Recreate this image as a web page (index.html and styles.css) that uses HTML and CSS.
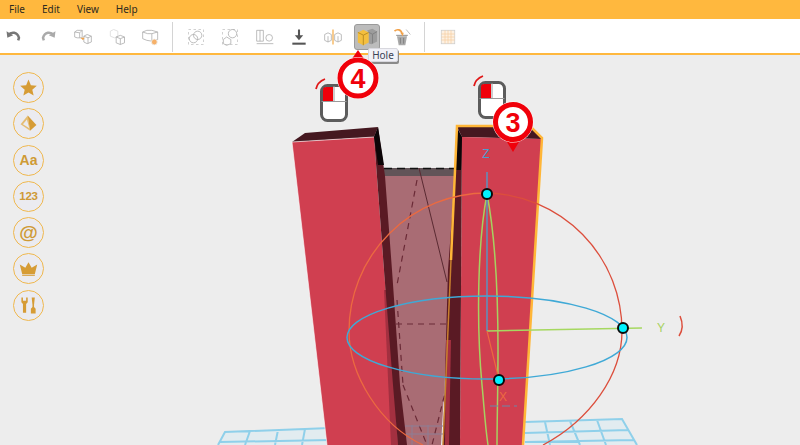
FILE: index.html
```html
<!DOCTYPE html>
<html lang="en">
<head>
<meta charset="utf-8">
<title>3D Builder</title>
<link rel="stylesheet" href="styles.css">
</head>
<body>
<div class="app">
  <nav class="menubar">
    <span class="menu-item">File</span>
    <span class="menu-item">Edit</span>
    <span class="menu-item">View</span>
    <span class="menu-item">Help</span>
  </nav>
  <div class="toolbar">
    <div class="tool"><svg viewBox="0 0 24 24" class="ico"><path d="M5 10c4-5 11-4 13 3l-1 3" class="s-dark"/><path d="M3 5l1 8 7-3z" class="f-dark"/></svg></div>
    <div class="tool"><svg viewBox="0 0 24 24" class="ico"><path d="M19 10c-4-5-11-4-13 3l1 3" class="s-mid"/><path d="M21 5l-1 8-7-3z" class="f-mid"/></svg></div>
    <div class="tool"><svg viewBox="0 0 24 24" class="ico"><path d="M2 6l3-2 6 0 0 9-6 0-3-1zM2 6l6 1 3-3M8 7v6" class="s-thin"/><path d="M13 11l4-2 5 2v7l-5 2-4-2zM13 11l5 2 4-2M18 13v7" class="s-thin"/><path d="M9 13h5l-2 3z" class="f-orange"/></svg></div>
    <div class="tool"><svg viewBox="0 0 24 24" class="ico"><path d="M4 5l4-2 5 2v6l-4 2-5-2z" class="s-faint"/><path d="M11 12l5-2 5 2v7l-5 2-5-2zM11 12l5 2 5-2M16 14v7" class="s-thin"/></svg></div>
    <div class="tool"><svg viewBox="0 0 24 24" class="ico"><path d="M2 6l5-2h6l7 2v9l-7 2-6-1-5-2zM2 6l6 2h5l7-2M13 8v9" class="s-thin"/><circle cx="16" cy="18" r="3.500" class="f-orange-soft"/></svg></div>
    <div class="sep"></div>
    <div class="tool"><svg viewBox="0 0 24 24" class="ico"><rect x="3" y="3" width="18" height="18" class="s-dash"/><circle cx="14" cy="10" r="5" class="s-thin"/><circle cx="9" cy="14" r="5" class="s-thin"/></svg></div>
    <div class="tool"><svg viewBox="0 0 24 24" class="ico"><rect x="3" y="3" width="18" height="18" class="s-dash"/><circle cx="15" cy="8" r="5" class="s-thin"/><path d="M4 15l4-3 5 3v5l-5 2-4-2z" class="s-thin"/></svg></div>
    <div class="tool"><svg viewBox="0 0 24 24" class="ico"><path d="M2 4h8v13H2zM6 4v13" class="s-thin"/><circle cx="17" cy="13" r="4" class="s-thin"/><path d="M2 20h20" class="s-thin"/></svg></div>
    <div class="tool"><svg viewBox="0 0 24 24" class="ico"><path d="M12 3v10" class="s-heavy"/><path d="M7 10h10l-5 6z" class="f-darker"/><path d="M4 20h16" class="s-heavy"/></svg></div>
    <div class="tool"><svg viewBox="0 0 24 24" class="ico"><path d="M2 9l4-2 4 2v7l-4 2-4-2zM22 9l-4-2-4 2v7l4 2 4-2zM6 11v7M18 11v7" class="s-thin"/><path d="M12 3v18" class="s-orange"/></svg></div>
    <div class="tool tool-active"><svg viewBox="0 0 24 24" class="ico ico-hole"><path d="M2 7l6-3 6 3v11l-6 3-6-3z" class="f-yellow"/><path d="M2 7l6 3 6-3M8 10v11" class="s-yellow"/><path d="M12 5l6-2 5 3v11l-6 3-3-1V7z" class="f-grey"/><path d="M14 7l4 2 5-3M18 9v10" class="s-greyline"/></svg></div>
    <div class="tool"><svg viewBox="0 0 24 24" class="ico"><path d="M6 11h12l-2 11H8z" class="f-can"/><path d="M5 10h14M10 13v7M14 13v7" class="s-can"/><path d="M3 5c3-3 8-2 9 3" class="s-orange-wide"/><path d="M10 7l4 0-1 4z" class="f-orange"/><path d="M17 3l5 6" class="s-thin"/></svg></div>
    <div class="sep sep-2"></div>
    <div class="tool"><svg viewBox="0 0 24 24" class="ico ico-grid"><rect x="3" y="3" width="18" height="18" class="f-grid"/><path d="M3 8h18M3 12h18M3 16h18M8 3v18M12 3v18M16 3v18" class="s-grid"/></svg></div>
  </div>

  <main class="viewport">
    <svg class="scene" viewBox="0 55 800 390" aria-hidden="true">
      <!-- floor grid -->
      <path d="M218 445L225 432 350 428V445zM525 422L622 419 637 445H525z" class="floor"/>
      <path d="M218 445L225 432 330 428M245 445L250 431M275 445L278 430M302 445L305 429M220 442L330 440M525 422L622 419 637 445M525 433L628 430M525 442L634 440M545 422L550 445M570 421L580 445M597 420L606 445" class="floor-line"/>

      <!-- back panel between the pillars -->
      <polygon points="378,168 457,168 441,445 395,445" class="panel"/>
      <polygon points="378,168 457,168 456,176 380,176" class="panel-top"/>
      <path d="M384 168.500H456" class="dash-black"/>
      <path d="M419 168L447 282" class="panel-solid"/>
      <path d="M417 180L397 285M396 324H450M403 385L427 445M447 385L432 445M397 300L403 385" class="panel-dash"/>
      <path d="M405 426H443M405 434H443M412 425V445M428 425V445" class="panel-grid"/>

      <!-- left pillar -->
      <polygon points="292,142 305,133 378,127 374,137" class="pillar-top"/>
      <polygon points="292,142 374,137 384,270 398,445 327,445" class="pillar-front"/>
      <polygon points="384,290 388,290 398,445 391,445" class="pillar-light"/>
      <polygon points="374,137 378,127 385,176 392,270 400,385 407,445 398,445 393,385 384,270" class="pillar-dark"/>
      <polygon points="374,137 378,127 384,165 378,165" class="pillar-black"/>
      <path d="M292 142L374 137M292 142L327 445" class="pillar-white"/>

      <!-- selected pillar -->
      <polygon points="457,127 530,127 542,139 462,137" class="pillar-top"/>
      <polygon points="462,137 542,139 523,445 460,445" class="pillar-front"/>
      <polygon points="457,128 462,137 460,445 443,445 448,270 455,176" class="pillar-dark"/>
      <polygon points="446,340 451,340 449,445 445,445" class="pillar-light"/>
      <polygon points="457,128 462,137 461,170 456,170" class="pillar-black"/>
      <path d="M443 445L451 260" class="selection-dim"/>
      <path d="M451 260L457 126 530 126 542 138 523 445" class="selection"/>

      <!-- gizmo -->
      <path d="M487 193A138 138 0 0 0 349 331C349 375 380 425 423 445" class="ring-orange"/>
      <path d="M487 193A138 138 0 0 1 622 331C622 375 590 420 543 445" class="ring-red"/>
      <path d="M487 194C478 240 476 320 482 385 484 405 485 425 488 445M487 194C494 230 498 290 498 350 498 390 497 420 497 445" class="ring-green"/>
      <ellipse cx="487" cy="337.500" rx="140" ry="41.500" class="ring-blue"/>
      <path d="M487 172V331" class="axis-blue"/>
      <path d="M487 331L642 328" class="axis-green"/>
      <path d="M487 331L499 380" class="axis-orange"/>
      <path d="M490 406H517" class="axis-dash"/>
      <path d="M680 316C683 323 683 330 679 336" class="axis-red"/>
      <text x="486" y="158" class="label label-z">Z</text>
      <text x="661" y="332" class="label label-y">Y</text>
      <text x="503" y="401" class="label label-x">X</text>
      <circle cx="487" cy="194" r="5" class="handle"/>
      <circle cx="623" cy="328" r="5" class="handle"/>
      <circle cx="499" cy="380" r="5" class="handle"/>
    </svg>

    <aside class="shelf">
      <div class="shelf-btn"><svg viewBox="0 0 24 24" class="shelf-ico"><path d="M12 2l3 7 7.500 .7-5.700 5 1.700 7.300L12 18.200 5.500 22l1.700-7.300-5.700-5L9 9z" class="f-gold"/></svg></div>
      <div class="shelf-btn"><svg viewBox="0 0 24 24" class="shelf-ico"><path d="M11 2L2 13l12 8z" class="f-gold-light"/><path d="M11 2l11 12-8 7z" class="f-gold"/><path d="M10 7L5 13l8 5z" class="f-shelf"/></svg></div>
      <div class="shelf-btn"><span class="shelf-text">Aa</span></div>
      <div class="shelf-btn"><span class="shelf-text shelf-num">123</span></div>
      <div class="shelf-btn"><span class="shelf-text shelf-at">@</span></div>
      <div class="shelf-btn"><svg viewBox="0 0 24 24" class="shelf-ico"><path d="M12 4l4 7 7-4-3 12H4L1 7l7 4z" class="f-gold"/><path d="M4 20.500h16" class="s-gold"/></svg></div>
      <div class="shelf-btn"><svg viewBox="0 0 24 24" class="shelf-ico"><path d="M3 2v6l2 2v11h4V10l2-2V2L9 2v4H5V2zM16 2h4l-1 9v3l2 2v6h-6v-6l2-2v-3z" class="f-gold"/></svg></div>
    </aside>

    <div class="tip">Hole</div>

    <svg class="mouse mouse-a" viewBox="0 0 34 46" aria-hidden="true">
      <path d="M1 12C2 7 5 4 10 2" class="mouse-arc"/>
      <rect x="6.500" y="8.500" width="25" height="35" rx="6" class="mouse-body"/>
      <path d="M8 24V13a3 3 0 0 1 3-3h7v14z" class="mouse-left"/>
      <path d="M6.500 24.500h25M19 9v16" class="mouse-split"/>
    </svg>
    <svg class="mouse mouse-b" viewBox="0 0 34 46" aria-hidden="true">
      <path d="M1 12C2 7 5 4 10 2" class="mouse-arc"/>
      <rect x="6.500" y="8.500" width="25" height="35" rx="6" class="mouse-body"/>
      <path d="M8 24V13a3 3 0 0 1 3-3h7v14z" class="mouse-left"/>
      <path d="M6.500 24.500h25M19 9v16" class="mouse-split"/>
    </svg>

    <div class="badge badge-up"><svg viewBox="0 0 46 54" class="badge-svg"><path d="M23 3L32 16H14z" class="badge-tail"/><circle cx="23" cy="31" r="21" class="badge-halo"/><circle cx="23" cy="31" r="18" class="badge-ring"/><text x="23" y="40.500" class="badge-num">4</text></svg></div>
    <div class="badge badge-down"><svg viewBox="0 0 46 54" class="badge-svg"><path d="M23 53L32 38H14z" class="badge-tail"/><circle cx="23" cy="23" r="20.500" class="badge-halo"/><circle cx="23" cy="23" r="17.500" class="badge-ring"/><text x="23" y="32.500" class="badge-num">3</text></svg></div>
  </main>
</div>
</body>
</html>
```
FILE: styles.css
```css
* { box-sizing: border-box; }
html, body { margin: 0; height: 100%; overflow: hidden; }
body { font-family: "Noto Sans", "Open Sans", sans-serif; color: #333; background: #ededed; }
.app { display: flex; flex-direction: column; width: 800px; height: 445px; }

.menubar { display: flex; align-items: center; height: 19px; padding-left: 9px; gap: 17px; background: #ffb83e; font-size: 10px; color: #2e2a20; flex: none; }
.menu-item { line-height: 15px; }

.toolbar { display: flex; align-items: center; height: 36px; padding-top: 2px; gap: 6.300px; background: #fff; border-bottom: 2px solid #ffb83e; flex: none; }
.tool { width: 28px; height: 26px; display: flex; align-items: center; justify-content: center; flex: none; }
.ico { width: 20px; height: 20px; display: block; }
.tool-active { background: #bcbcbc; border: 1px solid #9a9a9a; border-radius: 3px; width: 26px; margin: 0 1px; }
.ico-hole { width: 22px; height: 22px; }
.ico-grid { width: 18px; height: 18px; }
.sep { width: 1px; height: 30px; background: #d4d4d4; flex: none; margin: 0 2.700px 0 .5px; }
.sep-2 { margin: 0 2.700px 0 1.900px; }

.s-dark, .s-mid { fill: none; stroke-width: 3; }
.s-dark { stroke: #777; }
.s-mid { stroke: #aaa; }
.f-dark { fill: #777; }
.f-mid { fill: #aaa; }
.s-thin { fill: none; stroke: #b0b0b0; stroke-width: 1; }
.s-faint { fill: none; stroke: #dcdcdc; stroke-width: 1; }
.s-dash { fill: none; stroke: #c8c8c8; stroke-width: 1; stroke-dasharray: 3 3; }
.s-heavy { fill: none; stroke: #555; stroke-width: 2.500; }
.f-darker { fill: #555; }
.s-orange { fill: none; stroke: #f7c27a; stroke-width: 2; }
.f-orange { fill: #f2a24a; }
.f-orange-soft { fill: #f6b169; stroke: #eee; }
.s-orange-wide { fill: none; stroke: #f2a24a; stroke-width: 2; }
.f-can { fill: #aaa; }
.s-can { fill: none; stroke: #777; stroke-width: 1; }
.f-yellow { fill: #f4bf3f; }
.s-yellow { fill: none; stroke: #b88a20; stroke-width: 1; }
.f-grey { fill: #9c9c9c; }
.s-greyline { fill: none; stroke: #7f7f7f; stroke-width: 1; }
.f-grid { fill: #fdf1e2; stroke: #ccc; stroke-width: 1; }
.s-grid { fill: none; stroke: #f5cfa3; stroke-width: 1; }

.viewport { position: relative; flex: 1; background: #ededed; }
.scene { position: absolute; left: 0; top: 0; width: 800px; height: 390px; display: block; }

.floor { fill: #e2ecf0; }
.floor-line { fill: none; stroke: #8fd0ea; stroke-width: 2; }
.panel { fill: #a96c74; }
.panel-top { fill: #625458; }
.dash-black { fill: none; stroke: #111; stroke-width: 1.500; stroke-dasharray: 8 5; }
.panel-solid { fill: none; stroke: #5a2a32; stroke-width: 1; }
.panel-dash { fill: none; stroke: #6a2a36; stroke-width: 1.200; stroke-dasharray: 6 5; }
.panel-grid { fill: none; stroke: #8d7f95; stroke-width: 1; }
.pillar-top { fill: #451820; }
.pillar-front { fill: #d03f50; }
.pillar-light { fill: #a33040; }
.pillar-dark { fill: #5a1a24; }
.pillar-black { fill: #0c0507; }
.pillar-white { fill: none; stroke: #fff; stroke-width: .6; }
.selection { fill: none; stroke: #ffb638; stroke-width: 2.500; }
.selection-dim { fill: none; stroke: #c8802e; stroke-width: 1.500; }

.ring-orange { fill: none; stroke: #ec6a40; stroke-width: 1.300; }
.ring-red { fill: none; stroke: #dc4e3c; stroke-width: 1.300; }
.ring-green { fill: none; stroke: #a6d160; stroke-width: 1.500; }
.ring-blue { fill: none; stroke: #3fa9d6; stroke-width: 1.500; }
.axis-blue { fill: none; stroke: #4a9fd0; stroke-width: 1.300; }
.axis-green { fill: none; stroke: #a6d860; stroke-width: 1.500; }
.axis-orange { fill: none; stroke: #ec6a40; stroke-width: 1.100; }
.axis-dash { fill: none; stroke: #6b88a8; stroke-width: 1.200; stroke-dasharray: 8 4; }
.axis-red { fill: none; stroke: #dc4e3c; stroke-width: 1.500; }
.label { font-family: "Liberation Sans", sans-serif; font-size: 12px; text-anchor: middle; }
.label-z { fill: #4a9fd0; }
.label-y { fill: #a6d160; }
.label-x { fill: #ec6a40; }
.handle { fill: #00f2ff; stroke: #0a0a0a; stroke-width: 2; }

.shelf { position: absolute; left: 13px; top: 17px; display: flex; flex-direction: column; gap: 5.300px; }
.shelf-btn { width: 31px; height: 31px; border-radius: 50%; border: 1.500px solid #f0b84e; background: #ebebf0; display: flex; align-items: center; justify-content: center; }
.shelf-ico { width: 19px; height: 19px; display: block; }
.shelf-text { font-family: "Liberation Sans", sans-serif; font-weight: 700; font-size: 14px; line-height: 1; color: #cf9a36; }
.shelf-num { font-size: 11.500px; letter-spacing: -.3px; }
.shelf-at { font-size: 19px; }
.f-gold { fill: #d69c36; }
.f-gold-light { fill: #e5bd72; }
.f-shelf { fill: #ebebf0; }
.s-gold { fill: none; stroke: #d69c36; stroke-width: 1.500; }

.tip { position: absolute; left: 368px; top: -7px; width: 30px; height: 14px; background: #f1f1f7; border: 1px solid #d8d8de; border-radius: 2px; box-shadow: 1px 2px 0 #8a8a8a; font-size: 10px; line-height: 12px; text-align: center; color: #3b4356; }

.mouse { position: absolute; width: 34px; height: 46px; }
.mouse-a { left: 315px; top: 22px; }
.mouse-b { left: 473px; top: 19px; }
.mouse-arc { fill: none; stroke: #e01818; stroke-width: 1.800; }
.mouse-body { fill: #fff; stroke: #5c5c5c; stroke-width: 3; }
.mouse-left { fill: #f0000a; }
.mouse-split { fill: none; stroke: #9a9a9a; stroke-width: 1; }

.badge { position: absolute; width: 46px; height: 54px; }
.badge-up { left: 335px; top: -8px; }
.badge-down { left: 490px; top: 44px; }
.badge-svg { width: 46px; height: 54px; display: block; }
.badge-tail { fill: #f0000a; }
.badge-halo { fill: #fff; }
.badge-ring { fill: #fff; stroke: #f0000a; stroke-width: 5; }
.badge-num { font-family: "Liberation Sans", sans-serif; font-weight: 700; font-size: 27px; fill: #f0000a; text-anchor: middle; }
```
